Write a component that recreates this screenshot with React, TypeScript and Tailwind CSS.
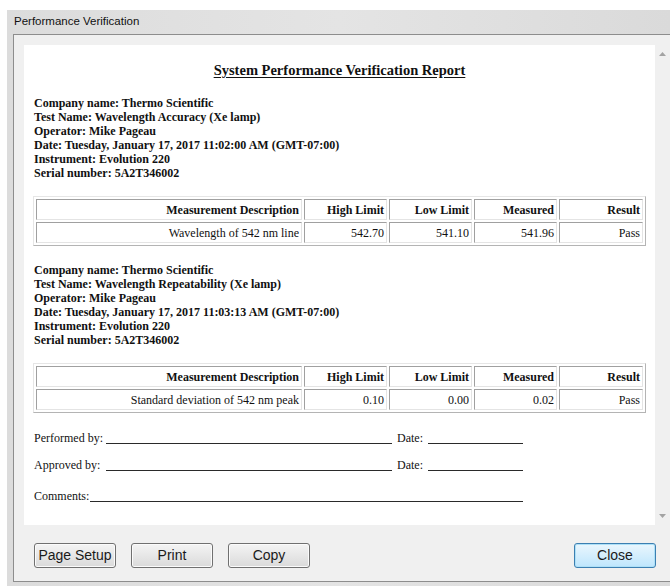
const serif = "font-['Liberation_Serif','Times_New_Roman',serif]"

type Row = { desc: string; high: string; low: string; measured: string; result: string }

const reports: { test: string; date: string; row: Row }[] = [
  {
    test: "Wavelength Accuracy (Xe lamp)",
    date: "Tuesday, January 17, 2017 11:02:00 AM (GMT-07:00)",
    row: { desc: "Wavelength of 542 nm line", high: "542.70", low: "541.10", measured: "541.96", result: "Pass" },
  },
  {
    test: "Wavelength Repeatability (Xe lamp)",
    date: "Tuesday, January 17, 2017 11:03:13 AM (GMT-07:00)",
    row: { desc: "Standard deviation of 542 nm peak", high: "0.10", low: "0.00", measured: "0.02", result: "Pass" },
  },
]

const cell =
  "h-[21px] border border-t-[#a0a0a0] border-l-[#a0a0a0] border-b-[#e4e4e4] border-r-[#e4e4e4] px-[2px] text-right leading-none align-middle"

function ResultTable({ row }: { row: Row }) {
  return (
    <table className="ml-[9px] w-[613px] table-fixed border-separate border-spacing-[2px] border border-t-[#e6e6e6] border-l-[#e6e6e6] border-b-[#b4b4b4] border-r-[#b4b4b4] text-[12px]">
      <colgroup>
        <col className="w-[266px]" />
        <col className="w-[83px]" />
        <col className="w-[83px]" />
        <col className="w-[83px]" />
        <col className="w-[84px]" />
      </colgroup>
      <tbody>
        <tr className="font-bold">
          <td className={cell}>Measurement Description</td>
          <td className={cell}>High Limit</td>
          <td className={cell}>Low Limit</td>
          <td className={cell}>Measured</td>
          <td className={cell}>Result</td>
        </tr>
        <tr>
          <td className={cell}>{row.desc}</td>
          <td className={cell}>{row.high}</td>
          <td className={cell}>{row.low}</td>
          <td className={cell}>{row.measured}</td>
          <td className={cell}>{row.result}</td>
        </tr>
      </tbody>
    </table>
  )
}

function Header({ test, date }: { test: string; date: string }) {
  return (
    <div className="pl-[10px] text-[12px] font-bold leading-[14px]">
      <div>Company name: Thermo Scientific</div>
      <div>Test Name: {test}</div>
      <div>Operator: Mike Pageau</div>
      <div>Date: {date}</div>
      <div>Instrument: Evolution 220</div>
      <div>Serial number: 5A2T346002</div>
    </div>
  )
}

// label followed by a ruled blank, the rule sits just under the text baseline
function Field({ label, labelW, lineW }: { label: string; labelW: string; lineW: string }) {
  return (
    <>
      <span className={`inline-block ${labelW}`}>{label}</span>
      <span className={`inline-block ${lineW} -mb-[2px] border-b border-[#2a2a2a]`} />
    </>
  )
}

function WinButton({ label, primary }: { label: string; primary?: boolean }) {
  return (
    <button
      className={
        primary
          ? "h-[25px] w-[82px] rounded-[3px] border border-[#3c7fb1] bg-gradient-to-b from-[#eaf6fd] to-[#bee6fd] text-[14px] text-[#1a1a1a] shadow-[inset_0_0_0_1px_#aee0f7]"
          : "h-[25px] w-[82px] rounded-[3px] border border-[#707070] bg-gradient-to-b from-[#f4f4f4] to-[#dadada] text-[14px] text-[#1a1a1a] shadow-[inset_0_0_0_1px_#fbfbfb]"
      }
    >
      {label}
    </button>
  )
}

function ScrollArrow({ up }: { up?: boolean }) {
  return (
    <svg width="7" height="4" viewBox="0 0 7 4" className="mx-auto">
      <path d={up ? "M0 4 L3.5 0 L7 4 Z" : "M0 0 L3.5 4 L7 0 Z"} fill="#a3a3a3" />
    </svg>
  )
}

export default function App() {
  return (
    <div className="h-[586px] w-[670px] overflow-hidden bg-white pl-[7px] pt-[10px] font-['Liberation_Sans',Arial,sans-serif]">
      <div className="flex h-full flex-col bg-gradient-to-r from-[#dcdcdc] via-[#e4e4e4] to-[#dadada]">
        <div className="flex h-[24px] items-center pl-[7px] text-[11.5px] text-[#111]">Performance Verification</div>
        <div className="ml-[6px] flex h-[548px] flex-col border-l border-t border-b border-[#8d8d8d] bg-[#f0f0f0]">
          <div className="mt-[10px] flex h-[480px]">
            <div className={`ml-[10px] w-[631px] bg-white text-[#111] ${serif}`}>
              <h1 className="pt-[16px] text-center text-[14.5px] font-bold leading-[18px] underline underline-offset-2">
                System Performance Verification Report
              </h1>

              {reports.map((r, i) => (
                <div key={i} className={i === 0 ? "mt-[17px]" : "mt-[17px]"}>
                  <Header test={r.test} date={r.date} />
                  <div className="mt-[16px]">
                    <ResultTable row={r.row} />
                  </div>
                </div>
              ))}

              <div className="mt-[18px] pl-[10px] text-[12px] leading-[14px]">
                <div>
                  <Field label="Performed by:" labelW="w-[72px]" lineW="w-[286px]" />
                  <Field label="Date:" labelW="ml-[5px] w-[31px]" lineW="w-[95px]" />
                </div>
                <div className="mt-[13px]">
                  <Field label="Approved by:" labelW="w-[72px]" lineW="w-[286px]" />
                  <Field label="Date:" labelW="ml-[5px] w-[31px]" lineW="w-[95px]" />
                </div>
                <div className="mt-[17px]">
                  <Field label="Comments:" labelW="w-[56px]" lineW="w-[433px]" />
                </div>
              </div>
            </div>
            <div className="flex w-[15px] flex-col justify-between bg-[#f0f0f0] py-[7px]">
              <ScrollArrow up />
              <ScrollArrow />
            </div>
          </div>
          <div className="flex items-start pl-[20px] pr-[14px] pt-[18px]">
            <div className="flex gap-[15px]">
              <WinButton label="Page Setup" />
              <WinButton label="Print" />
              <WinButton label="Copy" />
            </div>
            <div className="ml-auto">
              <WinButton label="Close" primary />
            </div>
          </div>
        </div>
      </div>
    </div>
  )
}
